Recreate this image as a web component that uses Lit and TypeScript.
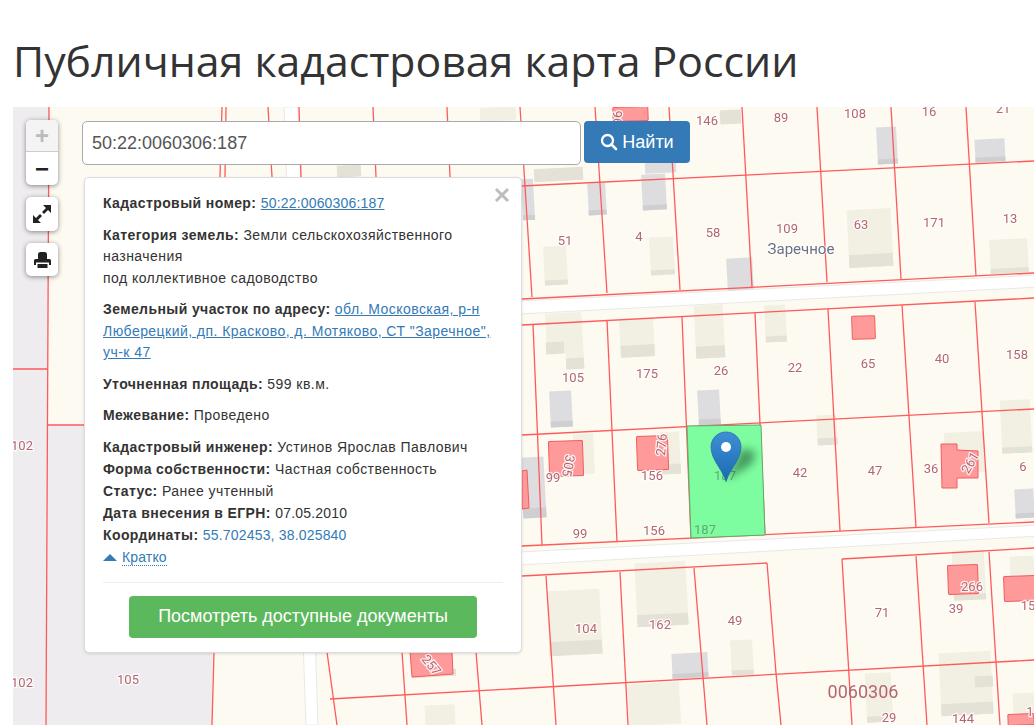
import { LitElement, html, css, svg } from "lit";
import { customElement } from "lit/decorators.js";

type L = [number, number, number, number];
const lines: L[] = [
  [49, 107, 46, 725], [13, 369, 48, 369], [48, 425, 84, 425],
  [222, 107, 220, 177], [226, 107, 225, 177], [268, 107, 272, 177], [299, 107, 301, 177], [373, 107, 376, 177], [447, 107, 450, 177], [520, 107, 532, 297],
  [214, 652, 212, 725], [327, 652, 337, 725], [402, 652, 407, 725], [476, 652, 482, 725],
  [330, 699, 1034, 660],
  [522, 186, 1034, 161], [595, 107, 607, 293], [669, 107, 680, 290], [742, 107, 752, 287], [817, 107, 827, 282], [891, 107, 901, 279], [966, 107, 976, 276],
  [522, 299, 1034, 273], [522, 325, 1034, 298],
  [533, 324, 542, 545], [607, 320, 617, 542], [682, 317, 691, 538], [755, 313, 765, 535], [828, 309, 840, 531], [902, 305, 916, 527], [975, 302, 989, 523],
  [522, 435, 1034, 409], [522, 546, 1034, 522],
  [522, 576, 767, 563], [767, 563, 776, 673], [842, 559, 1034, 548], [842, 559, 852, 725],
  [546, 576, 556, 725], [620, 572, 628, 725], [694, 568, 707, 725], [916, 556, 927, 725], [989, 552, 1000, 725], [776, 673, 781, 725],
];
type B = [number, number, number, number, string, number];
const buildings: B[] = [
  [480, 107, 36, 14, "b", 0], [337, 165, 24, 12, "d", 0],
  [720, 110, 21, 14, "d", 0], [877, 127, 20, 37, "g", 5], [975, 139, 30, 23, "g", 5],
  [534, 168, 49, 13, "d", 0], [645, 160, 31, 13, "g", 0], [642, 174, 24, 36, "g", 5], [588, 183, 18, 32, "g", 5], [522, 179, 12, 41, "g", 5],
  [544, 246, 23, 39, "b", 5], [650, 237, 24, 38, "b", 5], [727, 258, 26, 32, "g", 0], [848, 209, 44, 58, "b", 13], [990, 239, 38, 34, "b", 5],
  [546, 313, 36, 40, "b", 0], [546, 342, 18, 12, "d", 0], [565, 316, 18, 53, "b", 11], [620, 318, 34, 39, "b", 12], [695, 305, 29, 53, "b", 12], [765, 305, 21, 37, "b", 6],
  [550, 391, 22, 36, "g", 6], [698, 390, 22, 35, "g", 6], [817, 415, 20, 30, "b", 7], [1001, 400, 30, 53, "b", 6],
  [522, 457, 23, 61, "g", 10], [574, 434, 20, 40, "b", 0], [660, 432, 20, 42, "b", 10], [945, 432, 40, 41, "b", 0], [1015, 489, 19, 29, "g", 5],
  [548, 590, 53, 65, "b", 14], [636, 562, 51, 64, "b", 12], [731, 640, 22, 35, "b", 5], [672, 653, 36, 25, "g", 5],
  [953, 550, 32, 50, "b", 6], [1010, 556, 24, 20, "b", 0], [940, 652, 52, 63, "b", 12], [975, 676, 18, 11, "d", 0], [866, 673, 26, 49, "b", 6], [628, 683, 52, 42, "b", 0], [1013, 693, 21, 20, "b", 0], [425, 705, 30, 20, "b", 0],
  [412, 670, 44, 7, "d", 0],
];
type R = [number, number, number, number];
const reds: R[] = [
  [852, 316, 23, 23], [549, 441, 34, 35], [637, 436, 31, 34], [948, 565, 30, 29], [1004, 576, 32, 25], [1008, 714, 26, 11],
  [613, 107, 35, 14],
];
type T = [string, number, number, number?];
const labels: T[] = [
  ["146", 707, 125], ["89", 781, 122], ["108", 855, 118], ["16", 929, 116], ["21", 1003, 113],
  ["51", 565, 245], ["4", 639, 241], ["58", 713, 237], ["109", 787, 233], ["63", 861, 229], ["171", 934, 227], ["13", 1010, 223],
  ["105", 573, 382], ["175", 647, 378], ["26", 721, 375], ["22", 795, 372], ["65", 868, 368], ["40", 942, 363], ["158", 1017, 359],
  ["305", 564, 465, 100], ["99", 553, 482], ["276", 666, 445, -85], ["156", 652, 480], ["42", 800, 477], ["47", 875, 475], ["36", 931, 473], ["6", 1023, 471], ["261", 974, 465, -60],
  ["99", 580, 538], ["156", 654, 535],
  ["104", 586, 633], ["162", 660, 629], ["49", 735, 625], ["71", 882, 617], ["266", 972, 591], ["39", 956, 613], ["15", 1028, 610], ["29", 889, 722], ["144", 963, 723], ["1", 1030, 716],
  ["105", 128, 684], ["102", 22, 450], ["102", 22, 687], ["257", 428, 668, 50], ["96", 622, 118, -90],
];

@customElement("app-root")
export class AppRoot extends LitElement {
  static styles = css`
    :host { display: block; background: #fff; font-family: "Liberation Sans", Arial, sans-serif; color: #333; }
    .page { display: flex; flex-direction: column; padding-left: 13px; height: 725px; overflow: hidden; box-sizing: border-box; }
    h1 { margin: 0; padding: 34px 0 0 0; height: 107px; flex: none; box-sizing: border-box; font: 400 42.8px/54px "Open Sans", sans-serif; color: #333; white-space: nowrap; }
    .map { position: relative; flex: 1; overflow: hidden; background: #fdfaf2; }
    .canvas { position: absolute; left: 0; top: 0; filter: blur(0.45px); }
    .ln { stroke: #ff5a5a; stroke-width: 1.3; fill: none; }
    .road { fill: #fff; stroke: #e8e8e6; stroke-width: 1; }
    .grey { fill: #eeecef; }
    .b { fill: #f2efe3; } .d { fill: #e4e1d6; } .g { fill: #dddde0; } .gd { fill: #cfcfd2; } .bd { fill: #e4e1d6; }
    .r { fill: #ff9a9a; stroke: #f25c5c; stroke-width: 1; }
    .plot { fill: #7efda0; stroke: #63a86c; stroke-width: 1; }
    .lab { font: 400 13px Roboto, sans-serif; fill: #b5656f; stroke: #fff; stroke-width: 2.5; stroke-opacity: .85; paint-order: stroke; text-anchor: middle; }
    .lab.on { fill: #62a877; stroke: none; }
    .big { font: 400 18px Roboto, sans-serif; fill: #b5656f; text-anchor: middle; }
    .town { font: 400 15px Roboto, sans-serif; fill: #6c7088; stroke: #fff; stroke-width: 2; stroke-opacity: .6; paint-order: stroke; text-anchor: middle; }
    .controls { position: absolute; left: 13px; top: 13px; display: flex; flex-direction: column; gap: 12px; }
    .ctl { width: 32px; background: #fff; border-radius: 5px; box-shadow: 0 1px 5px rgba(0,0,0,.45); display: flex; flex-direction: column; overflow: hidden; }
    .btn { height: 33px; display: flex; align-items: center; justify-content: center; color: #222; }
    .tall { height: 34px; }
    .zoom .btn { font: 700 24px/32px "Liberation Sans", sans-serif; }
    .zoom .off { height: 32px; background: #f4f4f4; color: #bbb; border-bottom: 1px solid #ccc; box-sizing: border-box; }
    .search { position: absolute; left: 69px; top: 14px; display: flex; gap: 3px; align-items: flex-start; }
    input { width: 499px; height: 44px; box-sizing: border-box; border: 1px solid #aaa; border-radius: 5px; padding: 0 9px; font: 18px "Liberation Sans", sans-serif; color: #555; background: #fff; outline: none; margin: 0; }
    .find { width: 106px; height: 42px; box-sizing: border-box; border: 0; border-radius: 4px; background: #337ab7; color: #fff; font: 18px "Liberation Sans", sans-serif; display: flex; align-items: center; justify-content: center; gap: 4px; padding: 0; }
    .popup { position: absolute; left: 71px; top: 70px; width: 438px; box-sizing: border-box; background: #fff; border: 1px solid #ddd; border-radius: 5px; padding: 15px 18px 14px; font-size: 14px; line-height: 21.5px; letter-spacing: .45px; box-shadow: 0 1px 3px rgba(0,0,0,.12); }
    .close { position: absolute; right: 11px; top: 9px; display: block; }
    b { letter-spacing: .4px; }
    p { margin: 0 0 10px; }
    .last { margin-bottom: 9px; }
    .tight { line-height: 22px; margin: 0; }
    a { color: #337ab7; text-decoration: underline; }
    .num { letter-spacing: .18px; }
    .plain { text-decoration: none; }
    .more { display: flex; align-items: center; gap: 5px; line-height: 22px; margin-top: 4px; }
    .more a { text-decoration: none; border-bottom: 1px dotted #337ab7; line-height: 15px; letter-spacing: .15px; }
    hr { border: 0; border-top: 1px solid #eee; margin: 16px 0 13px; }
    .docs { display: block; width: 348px; height: 42px; margin: 0 auto; box-sizing: border-box; border: 0; border-radius: 4px; background: #5cb85c; color: #fff; font: 18px "Liberation Sans", sans-serif; padding: 0; }
  `;

  private bld(b: B) {
    const [x, y, w, h, k, dk] = b;
    const rot = `rotate(-3 ${x + w / 2} ${y + h / 2})`;
    return svg`<g transform=${rot}><rect class=${k} x=${x} y=${y} width=${w} height=${h}></rect>${dk ? svg`<rect class=${k === "g" ? "gd" : "bd"} x=${x} y=${y + h - dk} width=${w} height=${dk}></rect>` : ""}</g>`;
  }

  private map() {
    return html`<svg class="canvas" width="1021" height="618" viewBox="13 107 1021 618">
      <polygon class="grey" points="13,107 49,107 48,425 214,425 212,725 13,725"></polygon>
      <polygon class="road" points="284,107 298,107 318,725 306,725"></polygon>
      <polygon class="road" points="500,302 1040,275 1040,287 500,315"></polygon>
      <polygon class="road" points="500,553 1040,525 1040,536 500,566"></polygon>
      ${buildings.map((b) => this.bld(b))}
      ${reds.map(([x, y, w, h]) => svg`<rect class="r" x=${x} y=${y} width=${w} height=${h} rx="1" transform=${`rotate(-2 ${x + w / 2} ${y + h / 2})`}></rect>`)}
      <polygon class="r" points="941,444 957,444 957,450 978,451 978,478 957,478 957,488 942,488"></polygon>
      <polygon class="r" points="522,471 527,470 529,508 522,509"></polygon>
      <polygon class="r" points="410,652 452,652 453,674 412,677"></polygon>
      ${lines.map(([a, b, c, d]) => svg`<line class="ln" x1=${a} y1=${b} x2=${c} y2=${d}></line>`)}
      <polygon class="plot" points="687,426 761,425 765,535 691,538"></polygon>
      ${labels.map(([t, x, y, r]) => svg`<text class="lab" x=${x} y=${y} transform=${r ? `rotate(${r} ${x} ${y})` : ""}>${t}</text>`)}
      <text class="lab on" x="725" y="480">187</text>
      <text class="lab on" x="705" y="534">187</text>
      <text class="town" x="801" y="254">Заречное</text>
      <text class="big" x="863" y="698">0060306</text>
      <defs>
        <linearGradient id="pin" x1="0" y1="0" x2="0" y2="1"><stop offset="0" stop-color="#3f8fd4"></stop><stop offset="1" stop-color="#1a6ab3"></stop></linearGradient>
        <filter id="sh" x="-50%" y="-50%" width="200%" height="200%"><feGaussianBlur stdDeviation="4"></feGaussianBlur></filter>
      </defs>
      <polygon points="726,480 742,448 756,452 752,464" fill="#1f5a33" opacity=".6" filter="url(#sh)"></polygon>
      <path d="M726 481.500C723 470 711 460 711 447C711 438.500 717.500 432 726 432C734.500 432 741 438.500 741 447C741 460 729 470 726 481.500Z" fill="url(#pin)" stroke="#2a6fae" stroke-width=".8"></path>
      <circle cx="726" cy="447" r="5" fill="#fff"></circle>
    </svg>`;
  }

  render() {
    return html`<div class="page">
      <h1>Публичная кадастровая карта России</h1>
      <div class="map">
        ${this.map()}
        <div class="controls">
          <div class="ctl zoom"><div class="btn off">+</div><div class="btn">−</div></div>
          <div class="ctl"><div class="btn tall">
            <svg width="18" height="18" viewBox="0 0 18 18"><path fill="#222" d="M18 0V8L15 5L11 9L9 7L13 3L10 0ZM0 18V10L3 13L7 9L9 11L5 15L8 18Z"></path></svg>
          </div></div>
          <div class="ctl"><div class="btn">
            <svg width="17" height="16" viewBox="0 0 17 16"><path fill="#222" d="M4 2.500Q4 0 6.500 0h4Q13 0 13 2.500V7H4zM1.500 7H15.500Q17 7 17 8.500V13H15V10.500H2V13H0V8.500Q0 7 1.500 7zM3.500 12H13.500V16H3.500z"></path></svg>
          </div></div>
        </div>
        <div class="search">
          <input .value=${"50:22:0060306:187"} />
          <button class="find">
            <svg width="18" height="18" viewBox="0 0 18 18"><circle cx="7.500" cy="7.500" r="5.500" fill="none" stroke="#fff" stroke-width="2.300"></circle><path d="M11.500 11.500L16 16" stroke="#fff" stroke-width="2.600" stroke-linecap="round"></path></svg>
            Найти
          </button>
        </div>
        <div class="popup">
          <svg class="close" width="16" height="16" viewBox="0 0 16 16"><path d="M2 2L14 14M14 2L2 14" stroke="#bdbdbd" stroke-width="3"></path></svg>
          <p><b>Кадастровый номер:</b> <a class="num" href="#">50:22:0060306:187</a></p>
          <p><b>Категория земель:</b> Земли сельскохозяйственного назначения<br />под коллективное садоводство</p>
          <p><b>Земельный участок по адресу:</b> <a href="#">обл. Московская, р-н Люберецкий, дп. Красково, д. Мотяково, СТ "Заречное", уч-к 47</a></p>
          <p><b>Уточненная площадь:</b> 599 кв.м.</p>
          <p class="last"><b>Межевание:</b> Проведено</p>
          <p class="tight"><b>Кадастровый инженер:</b> Устинов Ярослав Павлович</p>
          <p class="tight"><b>Форма собственности:</b> Частная собственность</p>
          <p class="tight"><b>Статус:</b> Ранее учтенный</p>
          <p class="tight"><b>Дата внесения в ЕГРН:</b> <span class="num">07.05.2010</span></p>
          <p class="tight"><b>Координаты:</b> <a class="plain num" href="#">55.702453, 38.025840</a></p>
          <div class="more">
            <svg width="14" height="7" viewBox="0 0 14 7"><path fill="#337ab7" d="M7 0L14 7H0Z"></path></svg>
            <a href="#">Кратко</a>
          </div>
          <hr />
          <button class="docs">Посмотреть доступные документы</button>
        </div>
      </div>
    </div>`;
  }
}
